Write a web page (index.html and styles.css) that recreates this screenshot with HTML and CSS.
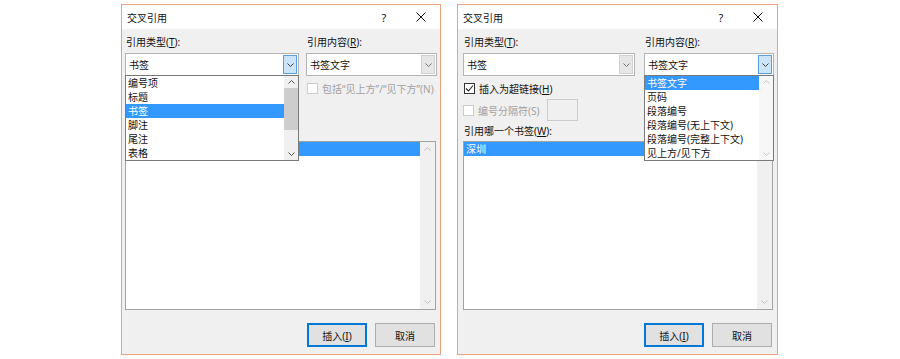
FILE: index.html
```html
<!DOCTYPE html>
<html lang="zh-CN">
<head>
<meta charset="utf-8">
<title>交叉引用</title>
<link rel="stylesheet" href="styles.css">
</head>
<body>
<div class="stage">

  <section class="dialog dialog-a">
    <header class="titlebar">
      <span class="title">交叉引用</span>
      <span class="help">?</span>
      <span class="close"><svg width="10" height="10" viewBox="0 0 10 10"><path d="M0.5 0.5L9.5 9.5M9.5 0.5L0.5 9.5" stroke="#111" stroke-width="1" fill="none"/></svg></span>
    </header>
    <div class="body">
      <div class="grid">
        <div class="lbl">引用类型(<u>T</u>):</div>
        <div class="lbl">引用内容(<u>R</u>):</div>
        <div class="combo">
          <span class="combo-text">书签</span>
          <span class="drop pressed"><svg width="7" height="4" viewBox="0 0 7 4"><path d="M0.5 0.5L3.5 3.5L6.5 0.5" stroke="#404040" fill="none"/></svg></span>
          <div class="dropdown">
            <div class="dd-items">
              <div class="item">编号项</div>
              <div class="item">标题</div>
              <div class="item selected">书签</div>
              <div class="item">脚注</div>
              <div class="item">尾注</div>
              <div class="item">表格</div>
            </div>
            <div class="dd-scroll">
              <span class="arrow"><svg width="7" height="4" viewBox="0 0 7 4"><path d="M0.5 3.5L3.5 0.5L6.5 3.5" stroke="#505050" fill="none"/></svg></span>
              <span class="track"><span class="thumb"></span></span>
              <span class="arrow"><svg width="7" height="4" viewBox="0 0 7 4"><path d="M0.5 0.5L3.5 3.5L6.5 0.5" stroke="#505050" fill="none"/></svg></span>
            </div>
          </div>
        </div>
        <div class="combo">
          <span class="combo-text">书签文字</span>
          <span class="drop"><svg width="7" height="4" viewBox="0 0 7 4"><path d="M0.5 0.5L3.5 3.5L6.5 0.5" stroke="#707070" fill="none"/></svg></span>
        </div>
        <div class="check-row covered"><span class="cb checked"><svg width="9" height="9" viewBox="0 0 9 9"><path d="M1 4.5L3.5 7L8 1.5" stroke="#222" stroke-width="1.1" fill="none"/></svg></span><span>插入为超链接(<u>H</u>)</span></div>
        <div class="check-row disabled"><span class="cb"></span><span>包括“见上方”/“见下方”(N)</span></div>
      </div>
      <div class="sep-row covered">
        <div class="sep-check disabled"><span class="cb"></span><span>编号分隔符(S)</span></div>
        <span class="textbox"></span>
      </div>
      <div class="lbl lbl-w covered">引用哪一个书签(<u>W</u>):</div>
      <div class="listbox">
        <div class="list-items"><div class="item selected"><span class="covered">深圳</span></div></div>
        <div class="vscroll">
          <span class="arrow"><svg width="7" height="4" viewBox="0 0 7 4"><path d="M0.5 3.5L3.5 0.5L6.5 3.5" stroke="#c4c4c4" fill="none"/></svg></span>
          <span class="arrow"><svg width="7" height="4" viewBox="0 0 7 4"><path d="M0.5 0.5L3.5 3.5L6.5 0.5" stroke="#c4c4c4" fill="none"/></svg></span>
        </div>
      </div>
      <div class="buttons">
        <button class="btn default">插入(<u>I</u>)</button>
        <button class="btn">取消</button>
      </div>
    </div>
  </section>

  <section class="dialog dialog-b">
    <header class="titlebar">
      <span class="title">交叉引用</span>
      <span class="help">?</span>
      <span class="close"><svg width="10" height="10" viewBox="0 0 10 10"><path d="M0.5 0.5L9.5 9.5M9.5 0.5L0.5 9.5" stroke="#111" stroke-width="1" fill="none"/></svg></span>
    </header>
    <div class="body">
      <div class="grid">
        <div class="lbl">引用类型(<u>T</u>):</div>
        <div class="lbl">引用内容(<u>R</u>):</div>
        <div class="combo">
          <span class="combo-text">书签</span>
          <span class="drop"><svg width="7" height="4" viewBox="0 0 7 4"><path d="M0.5 0.5L3.5 3.5L6.5 0.5" stroke="#707070" fill="none"/></svg></span>
        </div>
        <div class="combo">
          <span class="combo-text">书签文字</span>
          <span class="drop pressed"><svg width="7" height="4" viewBox="0 0 7 4"><path d="M0.5 0.5L3.5 3.5L6.5 0.5" stroke="#404040" fill="none"/></svg></span>
          <div class="dropdown">
            <div class="dd-items">
              <div class="item selected">书签文字</div>
              <div class="item">页码</div>
              <div class="item">段落编号</div>
              <div class="item">段落编号(无上下文)</div>
              <div class="item">段落编号(完整上下文)</div>
              <div class="item">见上方/见下方</div>
            </div>
            <div class="dd-scroll off">
              <span class="arrow"><svg width="7" height="4" viewBox="0 0 7 4"><path d="M0.5 3.5L3.5 0.5L6.5 3.5" stroke="#c4c4c4" fill="none"/></svg></span>
              <span class="track"></span>
              <span class="arrow"><svg width="7" height="4" viewBox="0 0 7 4"><path d="M0.5 0.5L3.5 3.5L6.5 0.5" stroke="#c4c4c4" fill="none"/></svg></span>
            </div>
          </div>
        </div>
        <div class="check-row"><span class="cb checked"><svg width="9" height="9" viewBox="0 0 9 9"><path d="M1 4.5L3.5 7L8 1.5" stroke="#222" stroke-width="1.1" fill="none"/></svg></span><span>插入为超链接(<u>H</u>)</span></div>
        <div class="check-row disabled covered"><span class="cb"></span><span>包括“见上方”/“见下方”(N)</span></div>
      </div>
      <div class="sep-row">
        <div class="sep-check disabled"><span class="cb"></span><span>编号分隔符(S)</span></div>
        <span class="textbox"></span>
      </div>
      <div class="lbl lbl-w">引用哪一个书签(<u>W</u>):</div>
      <div class="listbox">
        <div class="list-items"><div class="item selected">深圳</div></div>
        <div class="vscroll">
          <span class="arrow"><svg width="7" height="4" viewBox="0 0 7 4"><path d="M0.5 3.5L3.5 0.5L6.5 3.5" stroke="#c4c4c4" fill="none"/></svg></span>
          <span class="arrow"><svg width="7" height="4" viewBox="0 0 7 4"><path d="M0.5 0.5L3.5 3.5L6.5 0.5" stroke="#c4c4c4" fill="none"/></svg></span>
        </div>
      </div>
      <div class="buttons">
        <button class="btn default">插入(<u>I</u>)</button>
        <button class="btn">取消</button>
      </div>
    </div>
  </section>

</div>
</body>
</html>
```

FILE: styles.css
```css
* { box-sizing: border-box; }

html, body {
  margin: 0;
  padding: 0;
  background: #ffffff;
}

body {
  font-family: "Noto Sans", "Noto Sans CJK SC", sans-serif;
  font-size: 10px;
  color: #111;
}

.stage {
  display: flex;
  gap: 16px;
  padding: 4px 0 0 121px;
}

.dialog {
  position: relative;
  width: 320px;
  height: 351px;
  border: 1px solid #eba27d;
  background: #f0f0f0;
  display: flex;
  flex-direction: column;
}

.dialog-b { width: 321px; }

.titlebar {
  height: 24px;
  background: #ffffff;
  display: flex;
  align-items: center;
}

.title {
  flex: 1;
  padding-left: 5px;
  font-size: 10px;
}

.help {
  width: 36px;
  text-align: center;
  font-size: 11px;
  font-family: "Noto Sans", sans-serif;
}

.close {
  width: 38px;
  display: flex;
  justify-content: center;
  align-items: center;
}

.body {
  padding: 6px 3px 0 3px;
}

.dialog-b .body { padding-left: 5px; }

.grid {
  display: grid;
  grid-template-columns: 174px 131px;
  column-gap: 7px;
}

.dialog-b .grid {
  grid-template-columns: 172px 130px;
  column-gap: 9px;
}

.lbl {
  height: 14px;
  line-height: 14px;
  padding-left: 1px;
  white-space: nowrap;
}

.grid .lbl { margin-bottom: 4px; }

.covered { visibility: hidden; }

.combo {
  position: relative;
  height: 23px;
  border: 1px solid #b4b4b4;
  background: #ffffff;
  display: flex;
  align-items: center;
}

.combo-text {
  flex: 1;
  padding-left: 3px;
  white-space: nowrap;
}

.drop {
  width: 14px;
  height: 19px;
  margin-right: 1px;
  border: 1px solid #d0d0d0;
  background: #e6e6e6;
  display: flex;
  align-items: center;
  justify-content: center;
}

.drop.pressed {
  background: #cce4f7;
  border-color: #5a9fe0;
}

.check-row {
  margin-top: 6px;
  height: 13px;
  display: flex;
  align-items: center;
  gap: 4px;
  padding-left: 1px;
  white-space: nowrap;
}

.cb {
  width: 11px;
  height: 11px;
  border: 1px solid #333;
  background: #ffffff;
  display: flex;
  align-items: center;
  justify-content: center;
  flex: none;
}

.disabled { color: #a0a0a0; }
.disabled .cb { border-color: #cccccc; }

.sep-row {
  margin-top: 4px;
  height: 22px;
  display: grid;
  grid-template-columns: 84px 31px;
  align-items: center;
}

.sep-check {
  display: flex;
  align-items: center;
  gap: 4px;
  white-space: nowrap;
}

.textbox {
  height: 22px;
  border: 1px solid #cccccc;
  background: #f0f0f0;
}

.lbl-w { margin-top: 3px; }

.listbox {
  margin-top: 3px;
  margin-right: 1px;
  height: 169px;
  border: 1px solid #a3a3a3;
  background: #ffffff;
  display: flex;
}

.list-items { flex: 1; }

.item {
  height: 14px;
  line-height: 14px;
  padding-left: 2px;
  white-space: nowrap;
}

.item.selected {
  background: #3399ff;
  color: #ffffff;
}

.vscroll {
  width: 15px;
  background: #f0f0f0;
  display: flex;
  flex-direction: column;
  justify-content: space-between;
}

.arrow {
  height: 14px;
  display: flex;
  align-items: center;
  justify-content: center;
}

.buttons {
  margin-top: 13px;
  margin-right: 2px;
  display: flex;
  justify-content: flex-end;
  gap: 8px;
}

.btn {
  width: 60px;
  height: 24px;
  border: 1px solid #adadad;
  background: #e1e1e1;
  font: inherit;
  color: #111;
  padding: 0;
}

.btn.default {
  border-color: #0078d7;
  box-shadow: inset 0 0 0 1px #0078d7;
}

.dropdown {
  position: absolute;
  top: 21px;
  left: -1px;
  right: -1px;
  z-index: 10;
  border: 1px solid #7a7a7a;
  background: #ffffff;
  display: flex;
}

.dd-items { flex: 1; }

.dd-scroll {
  width: 14px;
  background: #f0f0f0;
  display: flex;
  flex-direction: column;
}

.dd-scroll .arrow { height: 12px; }

.dd-scroll .track { flex: 1; }

.thumb {
  display: block;
  height: 42px;
  background: #cdcdcd;
}

.dd-scroll.off { background: #f7f7f7; }
```
